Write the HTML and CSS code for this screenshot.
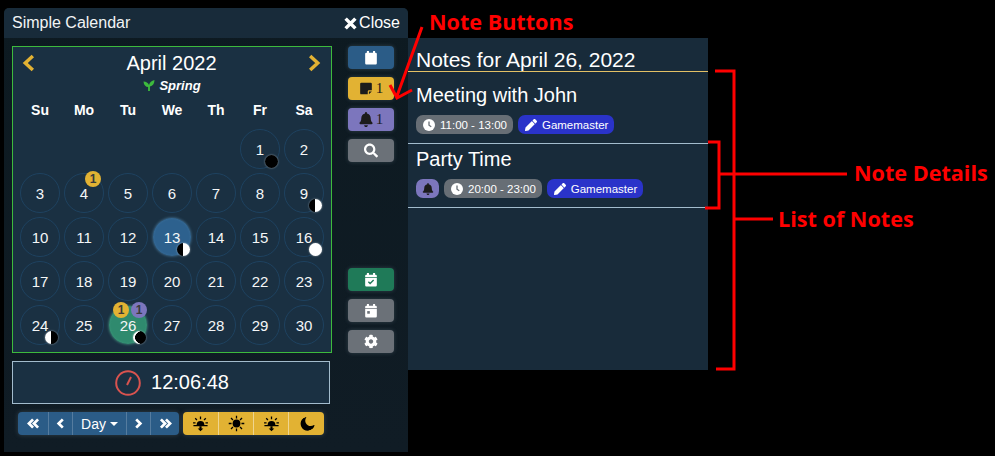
FILE: index.html
```html
<!DOCTYPE html>
<html lang="en">
<head>
<meta charset="utf-8">
<title>Simple Calendar</title>
<link rel="stylesheet" href="styles.css">
</head>
<body>
<svg class="defs" width="0" height="0" aria-hidden="true">
  <symbol id="i-calendar" viewBox="0 0 24 24"><path d="M5 1h3.500v3H15.500V1H19v3h1a2 2 0 0 1 2 2v16a2 2 0 0 1-2 2H4a2 2 0 0 1-2-2V6a2 2 0 0 1 2-2h1z" fill="currentColor"/></symbol>
  <symbol id="i-check" viewBox="0 0 24 24"><path d="M5 1h3.500v3h7V1H19v3h1a2 2 0 0 1 2 2v2H2V6a2 2 0 0 1 2-2h1zM2 9.500h20V22a2 2 0 0 1-2 2H4a2 2 0 0 1-2-2z" fill="currentColor"/><path d="M7.500 16l3 3 6-6" fill="none" stroke="#1f7a58" stroke-width="2.400"/></symbol>
  <symbol id="i-day" viewBox="0 0 24 24"><path d="M5 1h3.500v3h7V1H19v3h1a2 2 0 0 1 2 2v2H2V6a2 2 0 0 1 2-2h1zM2 9.500h20V22a2 2 0 0 1-2 2H4a2 2 0 0 1-2-2z" fill="currentColor"/><rect x="5.500" y="13" width="4.500" height="4.500" fill="#6b7178"/></symbol>
  <symbol id="i-note" viewBox="0 0 24 24"><path d="M4 2h16a2 2 0 0 1 2 2v11h-5a2 2 0 0 0-2 2v5H4a2 2 0 0 1-2-2V4a2 2 0 0 1 2-2zM17 17h5l-5 5z" fill="currentColor"/></symbol>
  <symbol id="i-bell" viewBox="0 0 448 512"><path fill="currentColor" d="M224 512c35.320 0 63.970-28.650 63.970-64H160.030c0 35.350 28.650 64 63.970 64zm215.390-149.710c-19.320-20.760-55.470-51.990-55.470-154.290 0-77.700-54.480-139.900-127.940-155.160V32c0-17.670-14.320-32-31.980-32s-31.980 14.330-31.980 32v20.840C118.560 68.100 64.080 130.300 64.080 208c0 102.300-36.150 133.530-55.470 154.290-6 6.450-8.660 14.160-8.610 21.710.11 16.400 12.980 32 32.100 32h383.800c19.120 0 32-15.600 32.100-32 .05-7.550-2.610-15.270-8.610-21.710z"/></symbol>
  <symbol id="i-search" viewBox="0 0 512 512"><path fill="currentColor" d="M505 442.700L405.300 343c-4.500-4.500-10.600-7-17-7H372c27.600-35.300 44-79.700 44-128C416 93.100 322.900 0 208 0S0 93.100 0 208s93.100 208 208 208c48.300 0 92.700-16.400 128-44v16.300c0 6.400 2.500 12.500 7 17l99.700 99.700c9.400 9.400 24.600 9.400 33.900 0l28.300-28.300c9.400-9.400 9.400-24.600.1-34zM208 336c-70.700 0-128-57.200-128-128 0-70.700 57.200-128 128-128 70.700 0 128 57.200 128 128 0 70.700-57.200 128-128 128z"/></symbol>
  <symbol id="i-cog" viewBox="0 0 512 512"><path fill="currentColor" d="M487.400 315.700l-42.600-24.600c4.300-23.200 4.300-47 0-70.200l42.600-24.600c4.900-2.800 7.100-8.600 5.500-14-11.100-35.600-30-67.800-54.700-94.600-3.800-4.100-10-5.100-14.800-2.300L380.800 110c-17.900-15.400-38.500-27.300-60.800-35.100V25.800c0-5.600-3.900-10.500-9.400-11.700-36.700-8.200-74.300-7.800-109.200 0-5.500 1.200-9.400 6.100-9.400 11.700V75c-22.200 7.900-42.800 19.800-60.800 35.100L88.700 85.500c-4.900-2.800-11-1.900-14.800 2.300-24.700 26.700-43.600 58.900-54.700 94.600-1.700 5.400.6 11.200 5.500 14L67.300 221c-4.300 23.200-4.300 47 0 70.200l-42.600 24.600c-4.900 2.800-7.100 8.600-5.500 14 11.100 35.600 30 67.800 54.700 94.600 3.800 4.100 10 5.100 14.800 2.300l42.600-24.600c17.900 15.400 38.500 27.300 60.800 35.100v49.200c0 5.600 3.900 10.500 9.400 11.700 36.700 8.200 74.300 7.800 109.200 0 5.500-1.200 9.400-6.100 9.400-11.700v-49.200c22.200-7.900 42.800-19.800 60.800-35.100l42.600 24.600c4.900 2.800 11 1.900 14.800-2.300 24.700-26.700 43.600-58.900 54.700-94.600 1.500-5.500-.7-11.300-5.600-14.100zM256 336c-44.100 0-80-35.900-80-80s35.900-80 80-80 80 35.900 80 80-35.900 80-80 80z"/></symbol>
  <symbol id="i-moon" viewBox="0 0 512 512"><path fill="currentColor" d="M283.211 512c78.962 0 151.079-35.925 198.857-94.792 7.068-8.708-.639-21.430-11.562-19.350-124.203 23.654-238.262-71.576-238.262-196.954 0-72.222 38.662-138.635 101.498-174.394 9.686-5.512 7.250-20.197-3.756-22.230A258.156 258.156 0 0 0 283.211 0c-141.309 0-256 114.511-256 256 0 141.309 114.511 256 256 256z"/></symbol>
  <symbol id="i-pencil" viewBox="0 0 512 512"><path fill="currentColor" d="M497.900 142.100l-46.100 46.100c-4.700 4.700-12.300 4.700-17 0l-111-111c-4.700-4.700-4.700-12.300 0-17l46.100-46.100c18.700-18.700 49.100-18.700 67.900 0l60.100 60.100c18.800 18.700 18.800 49.100 0 67.900zM284.200 99.800L21.600 362.400.4 483.900c-2.900 16.400 11.400 30.600 27.800 27.800l121.500-21.300 262.600-262.600c4.700-4.700 4.700-12.300 0-17l-111-111c-4.800-4.700-12.400-4.700-17.100 0z"/></symbol>
  <symbol id="i-clock" viewBox="0 0 24 24"><circle cx="12" cy="12" r="12" fill="currentColor"/><path d="M12 5v7.500l4.500 3" fill="none" stroke="#676e75" stroke-width="2.600"/></symbol>
  <symbol id="i-sun" viewBox="0 0 24 24"><circle cx="12" cy="12" r="5.500" fill="currentColor"/><path d="M12 1v4M12 19v4M1 12h4M19 12h4M4.200 4.200l2.800 2.800M17 17l2.800 2.800M4.200 19.800L7 17M17 7l2.800-2.800" stroke="currentColor" stroke-width="1.800" fill="none"/></symbol>
  <symbol id="i-sunrise" viewBox="0 0 24 24"><path d="M6.500 14a5.500 5.500 0 0 1 11 0z" fill="currentColor"/><path d="M12 2v4M1.500 11h3.500M19 11h3.500M4.500 4.500l2.500 2.500M17 7l2.500-2.500M2 15h20" stroke="currentColor" stroke-width="1.800" fill="none"/><path d="M12 23l-4-4h2.500v-3h3v3H16z" fill="currentColor"/></symbol>
  <symbol id="i-sprout" viewBox="0 0 24 24"><path d="M10 24V15C5 15 .5 11 0 3c6 0 10 2.500 12 8C13.500 5.500 17.500 1 24 0c0 8-4 13-10 14v10z" fill="currentColor"/></symbol>
</svg>

<main class="stage">
  <section class="window">
    <header class="titlebar">
      <span class="title">Simple Calendar</span>
      <span class="close"><svg class="x" viewBox="0 0 12 12"><path d="M1.500 1.500l9 9M10.500 1.500l-9 9" fill="none" stroke="currentColor" stroke-width="3.200"/></svg>Close</span>
    </header>
    <div class="win-body">
      <div class="main-col">
        <div class="calendar">
          <div class="month-row">
            <svg class="chev" viewBox="0 0 12 16"><path d="M10 1.500L3 8l7 6.500" fill="none" stroke="currentColor" stroke-width="3.200"/></svg>
            <span class="month">April 2022</span>
            <svg class="chev" viewBox="0 0 12 16"><path d="M2 1.500L9 8l-7 6.500" fill="none" stroke="currentColor" stroke-width="3.200"/></svg>
          </div>
          <div class="season"><svg class="sprout"><use href="#i-sprout"/></svg><span>Spring</span></div>
          <div class="weekdays"><span>Su</span><span>Mo</span><span>Tu</span><span>We</span><span>Th</span><span>Fr</span><span>Sa</span></div>
          <div class="days">
            <span class="blank"></span><span class="blank"></span><span class="blank"></span><span class="blank"></span><span class="blank"></span>
            <span class="day">1<i class="moon new"></i></span>
            <span class="day">2</span>
            <span class="day">3</span>
            <span class="day">4<b class="badge note b1">1</b></span>
            <span class="day">5</span><span class="day">6</span><span class="day">7</span><span class="day">8</span>
            <span class="day">9<i class="moon first"></i></span>
            <span class="day">10</span><span class="day">11</span><span class="day">12</span>
            <span class="day today">13<i class="moon gibbous"></i></span>
            <span class="day">14</span><span class="day">15</span>
            <span class="day">16<i class="moon full"></i></span>
            <span class="day">17</span><span class="day">18</span><span class="day">19</span><span class="day">20</span><span class="day">21</span><span class="day">22</span><span class="day">23</span>
            <span class="day">24<i class="moon last"></i></span>
            <span class="day">25</span>
            <span class="day selected">26<b class="badge note b1 shift">1</b><b class="badge rem b2">1</b><i class="moon crescent"></i></span>
            <span class="day">27</span><span class="day">28</span><span class="day">29</span><span class="day">30</span>
          </div>
        </div>
        <div class="clock">
          <svg class="dial" viewBox="0 0 26 26"><circle cx="13" cy="13" r="11.800" fill="none" stroke="currentColor" stroke-width="2"/><path d="M12 15l4-8" stroke="currentColor" stroke-width="2"/></svg>
          <span>12:06:48</span>
        </div>
        <div class="time-row">
          <div class="group blue">
            <span class="seg s-first"><svg class="gl" viewBox="0 0 14 12"><path d="M6.500 1.500L2 6l4.500 4.500M12 1.500L7.500 6l4.500 4.500" fill="none" stroke="currentColor" stroke-width="3"/></svg></span>
            <span class="seg s-nar"><svg class="gl" viewBox="0 0 14 12"><path d="M9.500 1.500L5 6l4.500 4.500" fill="none" stroke="currentColor" stroke-width="3"/></svg></span>
            <span class="seg s-day">Day<i class="caret"></i></span>
            <span class="seg s-nar"><svg class="gl" viewBox="0 0 14 12"><path d="M4.500 1.500L9 6l-4.500 4.500" fill="none" stroke="currentColor" stroke-width="3"/></svg></span>
            <span class="seg s-wide"><svg class="gl" viewBox="0 0 14 12"><path d="M2 1.500L6.500 6 2 10.500M7.500 1.500L12 6l-4.500 4.500" fill="none" stroke="currentColor" stroke-width="3"/></svg></span>
          </div>
          <div class="group yellow">
            <span class="seg"><svg class="sun"><use href="#i-sunrise"/></svg></span>
            <span class="seg"><svg class="sun"><use href="#i-sun"/></svg></span>
            <span class="seg"><svg class="sun"><use href="#i-sunrise"/></svg></span>
            <span class="seg s-last"><svg class="moonic"><use href="#i-moon"/></svg></span>
          </div>
        </div>
      </div>
      <nav class="side">
        <div class="side-group">
          <span class="sbtn c-blue"><svg class="ic"><use href="#i-calendar"/></svg></span>
          <span class="sbtn c-yellow dark"><svg class="ic"><use href="#i-note"/></svg><em>1</em></span>
          <span class="sbtn c-purple dark"><svg class="ic"><use href="#i-bell"/></svg><em>1</em></span>
          <span class="sbtn c-grey"><svg class="ic"><use href="#i-search"/></svg></span>
        </div>
        <div class="side-group">
          <span class="sbtn c-green"><svg class="ic"><use href="#i-check"/></svg></span>
          <span class="sbtn c-grey"><svg class="ic"><use href="#i-day"/></svg></span>
          <span class="sbtn c-grey"><svg class="ic"><use href="#i-cog"/></svg></span>
        </div>
      </nav>
    </div>
  </section>

  <aside class="notes">
    <h2 class="notes-title">Notes for April 26, 2022</h2>
    <ul class="note-list">
      <li class="note-item">
        <h3>Meeting with John</h3>
        <div class="pills">
          <span class="pill p-grey"><svg class="pi"><use href="#i-clock"/></svg>11:00 - 13:00</span>
          <span class="pill p-blue"><svg class="pi"><use href="#i-pencil"/></svg>Gamemaster</span>
        </div>
      </li>
      <li class="note-item">
        <h3>Party Time</h3>
        <div class="pills">
          <span class="pill p-purple"><svg class="pi"><use href="#i-bell"/></svg></span>
          <span class="pill p-grey"><svg class="pi"><use href="#i-clock"/></svg>20:00 - 23:00</span>
          <span class="pill p-blue"><svg class="pi"><use href="#i-pencil"/></svg>Gamemaster</span>
        </div>
      </li>
    </ul>
  </aside>
</main>

<svg class="marks" viewBox="0 0 995 456" aria-hidden="true">
  <g fill="none" stroke="#f00" stroke-width="3">
    <path d="M422 27L397 96M390 85l7 13 15-8"/>
    <path d="M715 71h19v298h-18M734 219h39"/>
    <path d="M708 142h11v66h-14M719 174h128"/>
  </g>
</svg>
<span class="label l-buttons">Note Buttons</span>
<span class="label l-details">Note Details</span>
<span class="label l-list">List of Notes</span>
</body>
</html>
```
FILE: styles.css
```css
* { box-sizing: border-box; }
html, body { margin: 0; height: 100%; }
body {
  position: relative;
  width: 995px;
  height: 456px;
  overflow: hidden;
  background: #000;
  color: #fff;
  font-family: "Liberation Sans", Arial, sans-serif;
}
.defs { position: absolute; }
.stage { display: flex; align-items: flex-start; padding: 8px 0 0 4px; }

/* Window */
.window {
  width: 404px;
  height: 444px;
  border-radius: 5px 5px 0 0;
  background: linear-gradient(180deg, #0d1a21, #101c25);
  overflow: hidden;
  flex: none;
}
.titlebar {
  height: 30px;
  padding: 0 8px;
  background: #182b3a;
  display: flex;
  align-items: center;
  justify-content: space-between;
  font-size: 16px;
}
.title { color: #f2f4f5; }
.close { display: flex; align-items: center; gap: 2px; }
.x { width: 13px; height: 13px; }
.win-body { display: flex; gap: 16px; padding: 8px; }
.main-col { width: 320px; flex: none; }
.side { width: 46px; height: 307px; display: flex; flex-direction: column; justify-content: space-between; }
.side-group { display: flex; flex-direction: column; gap: 8px; }
.sbtn {
  height: 23px;
  border-radius: 4px;
  display: flex;
  align-items: center;
  justify-content: center;
  gap: 3px;
  color: #fff;
  box-shadow: 0 0 4px rgba(150, 175, 190, .25);
}
.sbtn em { font: 15px "Liberation Serif", serif; color: #1c1c1c; }
.sbtn.dark { color: #1c1c1c; }
.ic { width: 14px; height: 15px; }
.c-blue { background: #2b5c87; }
.c-yellow { background: #e2b233; }
.c-purple { background: #7c76bd; }
.c-grey { background: #6b7178; }
.c-green { background: #1f7a58; }

/* Calendar */
.calendar {
  height: 307px;
  border: 1px solid #3dba3d;
  background: #1a3042;
  padding: 0 5px;
}
.month-row {
  height: 30px;
  display: flex;
  align-items: center;
  justify-content: space-between;
  padding: 2px 5px 0 4px;
}
.month { font-size: 20px; }
.chev { width: 13px; height: 18px; color: #e2b233; }
.season {
  height: 16px;
  display: flex;
  align-items: center;
  justify-content: center;
  gap: 4px;
  font-size: 13px;
  font-style: italic;
  font-weight: 700;
}
.sprout { width: 12px; height: 11px; color: #3dba3d; }
.weekdays {
  display: grid;
  grid-template-columns: repeat(7, 44px);
  margin-top: 6px;
  height: 22px;
  line-height: 22px;
  text-align: center;
  font-size: 14px;
  font-weight: 700;
}
.days {
  display: grid;
  grid-template-columns: repeat(7, 40px);
  grid-auto-rows: 40px;
  gap: 4px;
  margin: 8px 0 0 2px;
}
.day {
  position: relative;
  border: 1px solid #1e4260;
  border-radius: 50%;
  display: flex;
  align-items: center;
  justify-content: center;
  font-size: 15px;
  color: #f4f6f7;
}
.today {
  background: radial-gradient(circle, #2d618e 62%, #4a7ea5);
  border: 0;
  margin: 1px;
  box-shadow: 0 0 3px #4f83a8;
}
.selected {
  background: radial-gradient(circle, #2f8a6e 62%, #4aa48a);
  border: 0;
  margin: 1px;
  box-shadow: 0 0 3px #4fa88f;
}
.badge {
  position: absolute;
  top: -3px;
  width: 16px;
  height: 16px;
  border-radius: 50%;
  color: #3a3a3a;
  font: 700 12px/16px "Liberation Sans", sans-serif;
  text-align: center;
}
.selected .badge { top: -4px; }
.note { background: #e2b233; }
.rem { background: #7c76bd; }
.b1 { left: 20px; }
.b1.shift { left: 4px; }
.b2 { left: 22px; }
.moon {
  position: absolute;
  left: 24px;
  top: 25px;
  width: 13px;
  height: 13px;
  border-radius: 50%;
  box-shadow: 0 0 2px rgba(255, 255, 255, .6);
}
.today .moon, .selected .moon { left: 24px; top: 25px; }
.new { background: #000; }
.full { background: #fff; }
.first { background: linear-gradient(90deg, #000 50%, #fff 50%); }
.gibbous { background: linear-gradient(90deg, #000 45%, #fff 45%); }
.last { background: linear-gradient(90deg, #fff 50%, #000 50%); }
.crescent { background: radial-gradient(circle at 65% 50%, #000 58%, #fff 60%); }

/* Clock */
.clock {
  width: 318px;
  height: 43px;
  margin-top: 8px;
  padding-left: 2px;
  border: 1px solid #a3bccd;
  background: #1a3042;
  display: flex;
  align-items: center;
  justify-content: center;
  gap: 10px;
  font-size: 20px;
}
.dial { width: 26px; height: 26px; color: #d9534f; }

/* Time buttons */
.time-row { display: flex; gap: 4px; margin: 8px 0 0 6px; }
.group {
  display: flex;
  height: 23px;
  border-radius: 4px;
  overflow: hidden;
  box-shadow: 0 0 5px rgba(150, 175, 190, .25);
}
.seg {
  display: flex;
  align-items: center;
  justify-content: center;
  border-left: 1px solid rgba(255, 255, 255, .2);
}
.seg:first-child { border-left: 0; }
.blue { background: #2b5c87; font-size: 14px; }
.yellow { background: #e2b233; color: #000; }
.yellow .seg { width: 35px; border-left-color: rgba(255, 255, 255, .45); }
.yellow .s-last { width: 36px; }
.s-first { width: 30px; }
.s-wide { width: 29px; }
.s-nar { width: 24px; }
.s-day { width: 54px; gap: 4px; }
.gl { width: 13px; height: 11px; }
.caret { width: 0; height: 0; border: 4px solid transparent; border-top-color: #fff; border-bottom: 0; }
.sun { width: 17px; height: 17px; }
.moonic { width: 14px; height: 14px; transform: rotate(-25deg); }

/* Notes panel */
.notes {
  width: 300px;
  height: 332px;
  margin-top: 30px;
  background: #182b3a;
  flex: none;
}
.notes-title {
  margin: 0;
  height: 34px;
  padding: 9px 8px 0;
  border-bottom: 1px solid #e2c065;
  font-size: 21px;
  line-height: 25px;
  font-weight: 400;
}
.note-list { list-style: none; margin: 8px 0 0; padding: 0; }
.note-item {
  height: 64px;
  padding: 3px 8px 0;
  border-bottom: 1px solid #a3bccd;
}
.note-item h3 {
  margin: 0;
  height: 24px;
  font-size: 20px;
  line-height: 24px;
  font-weight: 400;
}
.pills { display: flex; gap: 5px; margin-top: 8px; }
.pill {
  height: 19px;
  border-radius: 7px;
  padding: 0 6px 0 7px;
  display: flex;
  align-items: center;
  gap: 5px;
  font-size: 11.5px;
}
.pi { width: 12px; height: 12px; }
.p-grey { background: #676e75; }
.p-blue { background: #2a33c9; }
.p-purple { background: #7c76bd; color: #1c1c1c; padding: 0 5px; width: 23px; justify-content: center; }

/* Annotations over the screenshot */
.marks { position: absolute; left: 0; top: 0; width: 995px; height: 456px; pointer-events: none; }
.label {
  position: absolute;
  color: #f00;
  font: 700 21.6px/26px "Open Sans", sans-serif;
  white-space: nowrap;
}
.l-buttons { left: 429px; top: 9px; }
.l-details { left: 854px; top: 160px; }
.l-list { left: 778px; top: 206px; }
```
